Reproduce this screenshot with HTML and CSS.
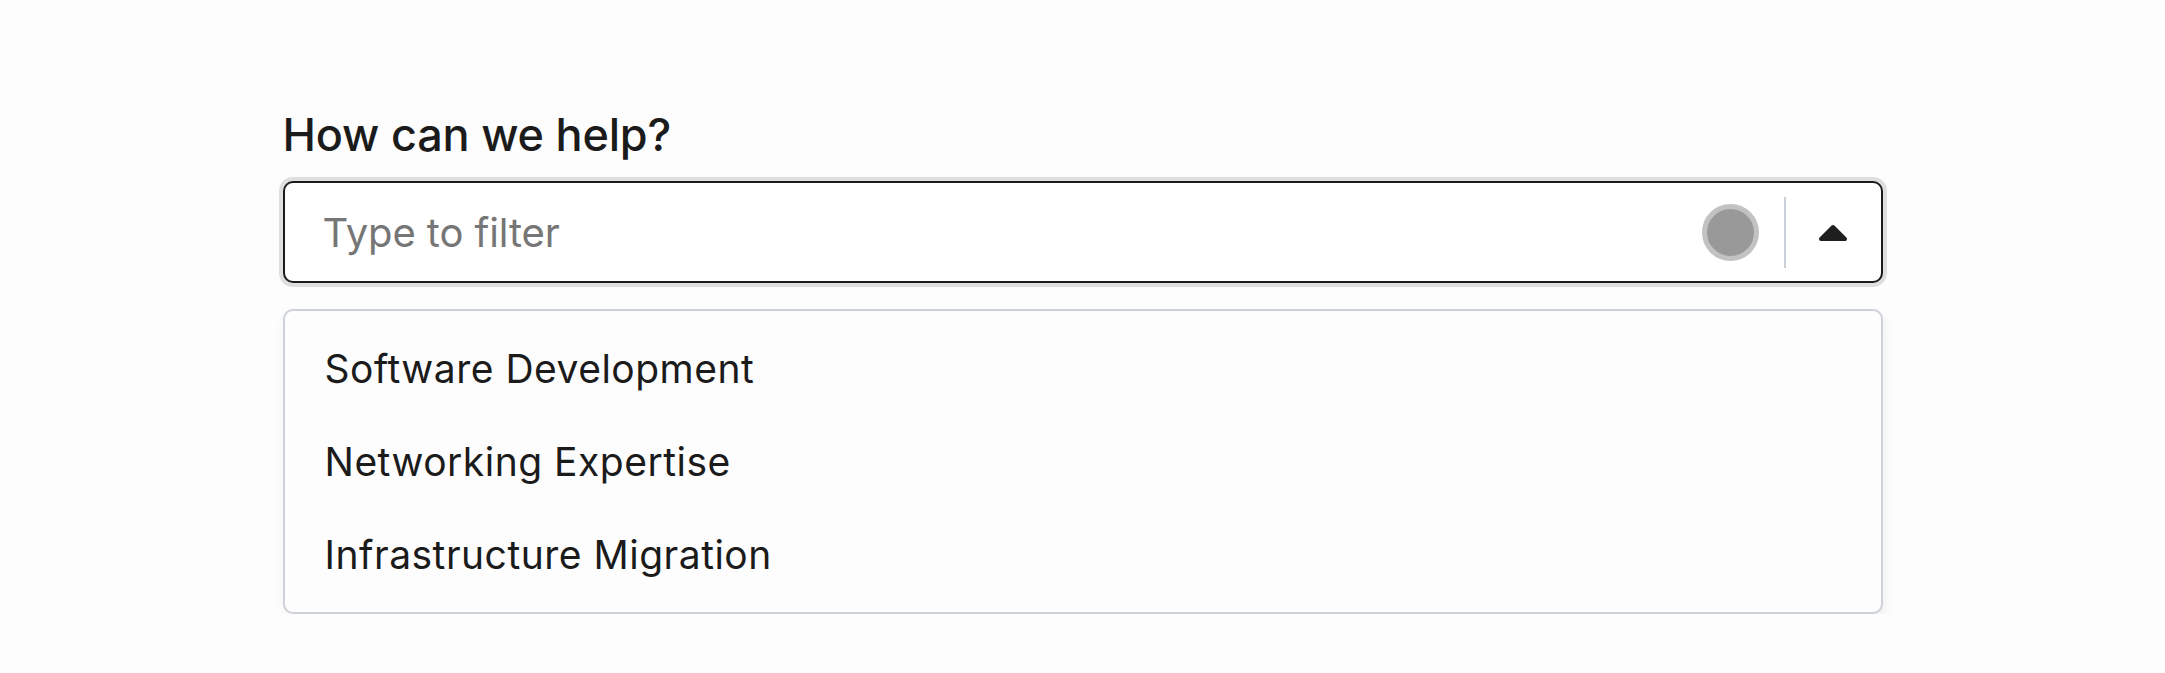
FILE: index.html
```html
<!DOCTYPE html>
<html lang="en">
<head>
    <meta charset="UTF-8">
    <meta name="viewport" content="width=device-width, initial-scale=1.0">
    <title>How can we help?</title>
    <link rel="stylesheet" href="styles.css">
</head>
<body>
    <div class="container">
        <label class="field-label" for="service">How can we help?</label>

        <div class="select-control">
            <input id="service" class="select-input" type="text" placeholder="Type to filter">
            <div class="loading-dot"></div>
            <div class="separator"></div>
            <div class="indicator">
                <svg width="30" height="19" viewBox="0 0 30 19">
                    <path d="M3 16 L15 4 L27 16 Z" fill="#1f1f1f" stroke="#1f1f1f" stroke-width="4" stroke-linejoin="round"/>
                </svg>
            </div>
        </div>

        <ul class="menu">
            <li class="option">Software Development</li>
            <li class="option">Networking Expertise</li>
            <li class="option">Infrastructure Migration</li>
        </ul>
    </div>
</body>
</html>
```

FILE: styles.css
```css
body {
    font-family: Inter, "Noto Sans", sans-serif;
    margin: 0;
    padding-top: 106px;
    background: #fdfdfd;
    color: #1b1b1b;
}
.container {
    width: 1600px;
    margin: 0 auto;
}
.field-label {
    display: block;
    font-size: 45px;
    font-weight: 500;
    line-height: 57px;
    letter-spacing: -0.2px;
    margin-bottom: 18px;
}
.select-control {
    display: flex;
    align-items: center;
    height: 102px;
    box-sizing: border-box;
    border: 2px solid #1c1c1c;
    border-radius: 10px;
    background: #fff;
    box-shadow: 0 0 0 4px #dfdfdf;
}
.select-input {
    flex: 1;
    min-width: 0;
    border: none;
    outline: none;
    background: transparent;
    padding: 0 0 0 38px;
    font-family: inherit;
    font-size: 40px;
    letter-spacing: -0.1px;
    color: #1b1b1b;
}
.select-input::placeholder {
    color: #767676;
}
.loading-dot {
    width: 47px;
    height: 47px;
    border-radius: 50%;
    background: #999;
    border: 5px solid #c2c2c2;
}
.separator {
    width: 2px;
    height: 71px;
    margin-left: 25px;
    background: #cbd0d8;
}
.indicator {
    width: 95px;
    display: flex;
    justify-content: center;
    align-items: center;
}
.menu {
    list-style: none;
    margin: 26px 0 0;
    padding: 11px 0;
    border: 2px solid #cdd1d8;
    border-radius: 10px;
    background: #fdfdfd;
    box-shadow: 2px 5px 12px rgba(0, 0, 0, 0.06);
}
.option {
    font-size: 39px;
    line-height: 57px;
    letter-spacing: 0.5px;
    padding: 18px 40px;
}
```
